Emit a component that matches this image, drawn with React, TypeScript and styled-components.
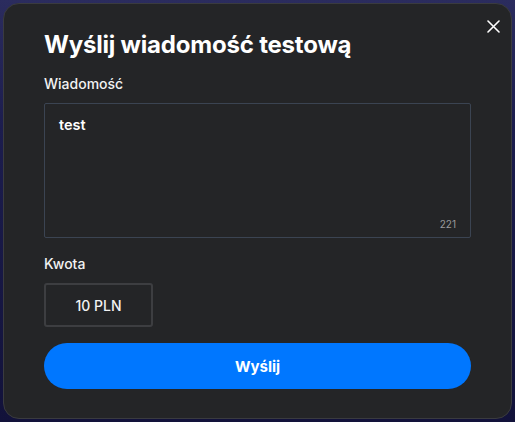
import React from 'react'
import styled, { createGlobalStyle } from 'styled-components'

const GlobalStyle = createGlobalStyle`
  html, body {
    margin: 0;
    padding: 0;
    height: 422px;
    overflow: hidden;
    background: linear-gradient(180deg, #2b2c5e 0%, #1c1d4e 30%, #12123a 100%);
  }
  body {
    font-family: Inter, 'Noto Sans', sans-serif;
    color: #fff;
  }
`

const Backdrop = styled.div`
  height: 422px;
  padding: 3px;
  box-sizing: border-box;
`

const Modal = styled.div`
  position: relative;
  box-sizing: border-box;
  height: 416px;
  background: #242527;
  border: 1px solid #3a3b3f;
  border-radius: 16px;
  padding: 26px 40px 0 40px;
  display: flex;
  flex-direction: column;
`

const CloseButton = styled.button`
  position: absolute;
  top: 11px;
  right: 7px;
  width: 22px;
  height: 22px;
  padding: 0;
  border: none;
  background: transparent;
  color: #fff;
  cursor: pointer;
  display: flex;
  align-items: center;
  justify-content: center;
`

const Title = styled.h2`
  margin: 0;
  font-size: 24px;
  line-height: 30px;
  font-weight: 700;
  letter-spacing: -0.2px;
`

const Label = styled.label`
  display: block;
  font-size: 14px;
  line-height: 20px;
  font-weight: 500;
  color: #f2f2f2;
`

const Field = styled.div<{ top: number }>`
  margin-top: ${(p) => p.top}px;
  display: flex;
  flex-direction: column;
  gap: 9px;
`

const TextAreaWrap = styled.div`
  position: relative;
  height: 135px;
  box-sizing: border-box;
  border: 1px solid #3b4452;
  border-radius: 2px;
`

const TextArea = styled.textarea`
  width: 100%;
  height: 100%;
  box-sizing: border-box;
  resize: none;
  background: transparent;
  border: none;
  outline: none;
  padding: 10px 14px;
  color: #fff;
  font-family: Inter, 'Noto Sans', sans-serif;
  font-size: 14.5px;
  font-weight: 600;
  line-height: 22px;
`

const Counter = styled.span`
  position: absolute;
  right: 14px;
  bottom: 7px;
  font-size: 10px;
  color: #9a9a9c;
`

const AmountBox = styled.div`
  width: 109px;
  height: 44px;
  box-sizing: border-box;
  border: 2px solid #3d3e41;
  border-radius: 3px;
  display: flex;
  align-items: center;
  justify-content: center;
  font-size: 14px;
  font-weight: 500;
  color: #f2f2f2;
`

const SubmitButton = styled.button`
  margin-top: 16px;
  height: 46px;
  width: 100%;
  border: none;
  border-radius: 23px;
  background: #0077ff;
  color: #fff;
  font-family: Inter, 'Noto Sans', sans-serif;
  font-size: 15px;
  font-weight: 700;
  cursor: pointer;
`

export default function App() {
  return (
    <>
      <GlobalStyle />
      <Backdrop>
        <Modal>
          <CloseButton aria-label="Zamknij">
            <svg width="13" height="13" viewBox="0 0 13 13" fill="none">
              <path d="M1 1L12 12M12 1L1 12" stroke="#fff" strokeWidth="1.6" strokeLinecap="round" />
            </svg>
          </CloseButton>
          <Title>Wyślij wiadomość testową</Title>
          <Field top={14}>
            <Label>Wiadomość</Label>
            <TextAreaWrap>
              <TextArea defaultValue="test" />
              <Counter>221</Counter>
            </TextAreaWrap>
          </Field>
          <Field top={16}>
            <Label>Kwota</Label>
            <AmountBox>10 PLN</AmountBox>
          </Field>
          <SubmitButton>Wyślij</SubmitButton>
        </Modal>
      </Backdrop>
    </>
  )
}
